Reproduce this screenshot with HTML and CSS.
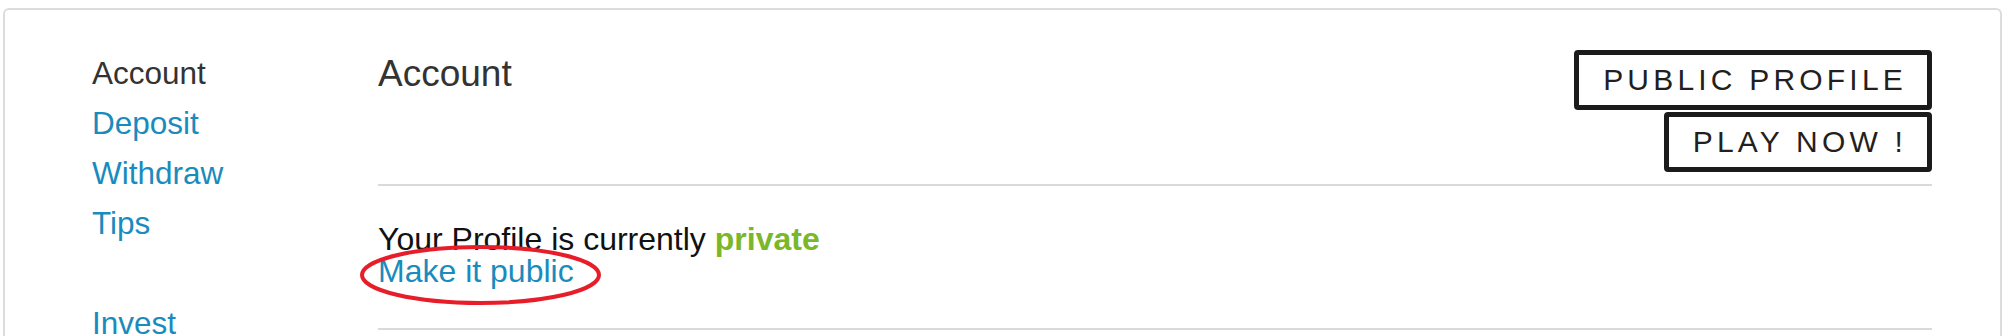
FILE: index.html
```html
<!DOCTYPE html>
<html>
<head>
<meta charset="utf-8">
<link rel="stylesheet" href="styles.css">
</head>
<body>
<div class="panel">
  <nav class="sidenav">
    <div class="nav-item current">Account</div>
    <a class="nav-item" href="#">Deposit</a>
    <a class="nav-item" href="#">Withdraw</a>
    <a class="nav-item" href="#">Tips</a>
    <a class="nav-item gap" href="#">Invest</a>
  </nav>
  <main class="main">
    <div class="header">
      <h2 class="title">Account</h2>
      <div class="actions">
        <a class="btn" href="#">PUBLIC PROFILE</a>
        <a class="btn" href="#">PLAY NOW !</a>
      </div>
    </div>
    <hr class="rule">
    <div class="profile">
      <div class="status">Your Profile is currently <strong class="private">private</strong></div>
      <a class="make-public" href="#">Make it public</a>
      <svg class="circle" width="245" height="64" viewBox="0 0 245 64">
        <ellipse cx="122.5" cy="32" rx="118.5" ry="28" fill="none" stroke="#e71d2a" stroke-width="4"/>
      </svg>
    </div>
    <hr class="rule">
  </main>
</div>
</body>
</html>
```

FILE: styles.css
```css
html, body {
  margin: 0;
  padding: 0;
  background: #fff;
}
body {
  font-family: "Liberation Sans", Arial, Helvetica, sans-serif;
  overflow: hidden;
  height: 336px;
}
.panel {
  margin: 8px 8px 0 3px;
  border: 2px solid #dcdcdc;
  border-bottom: none;
  border-radius: 6px 6px 0 0;
  padding: 40px 68px 0 87px;
  display: flex;
  height: 400px;
}
.sidenav {
  width: 286px;
  flex: none;
  display: flex;
  flex-direction: column;
  margin-top: -2px;
}
.nav-item {
  font-size: 31.5px;
  line-height: 50px;
  color: #1a8bbd;
  text-decoration: none;
}
.nav-item.current {
  color: #333;
}
.nav-item.gap {
  margin-top: 50px;
}
.main {
  flex: 1;
  display: flex;
  flex-direction: column;
}
.header {
  display: flex;
  justify-content: space-between;
  align-items: flex-start;
}
.title {
  margin: 4px 0 0 0;
  font-size: 37px;
  line-height: 40px;
  font-weight: normal;
  color: #333;
}
.actions {
  display: flex;
  flex-direction: column;
  align-items: flex-end;
  gap: 2px;
}
.btn {
  display: block;
  border: 5px solid #1b1b1b;
  border-radius: 4px;
  height: 50px;
  line-height: 50px;
  font-size: 30px;
  letter-spacing: 4.2px;
  padding: 0 20px 0 24px;
  color: #231f20;
  text-decoration: none;
}
.rule {
  margin: 12px 0 0 0;
  border: none;
  height: 2px;
  background: #dadada;
}
.profile {
  position: relative;
  padding: 37px 0 41px 0;
  font-size: 32px;
  line-height: 32px;
}
.profile + .rule {
  margin-top: 0;
}
.status {
  color: #111;
}
.private {
  color: #7ab72a;
  font-weight: bold;
}
.make-public {
  display: block;
  color: #1a8bbd;
  text-decoration: none;
}
.circle {
  position: absolute;
  left: -20px;
  top: 57px;
}
```
